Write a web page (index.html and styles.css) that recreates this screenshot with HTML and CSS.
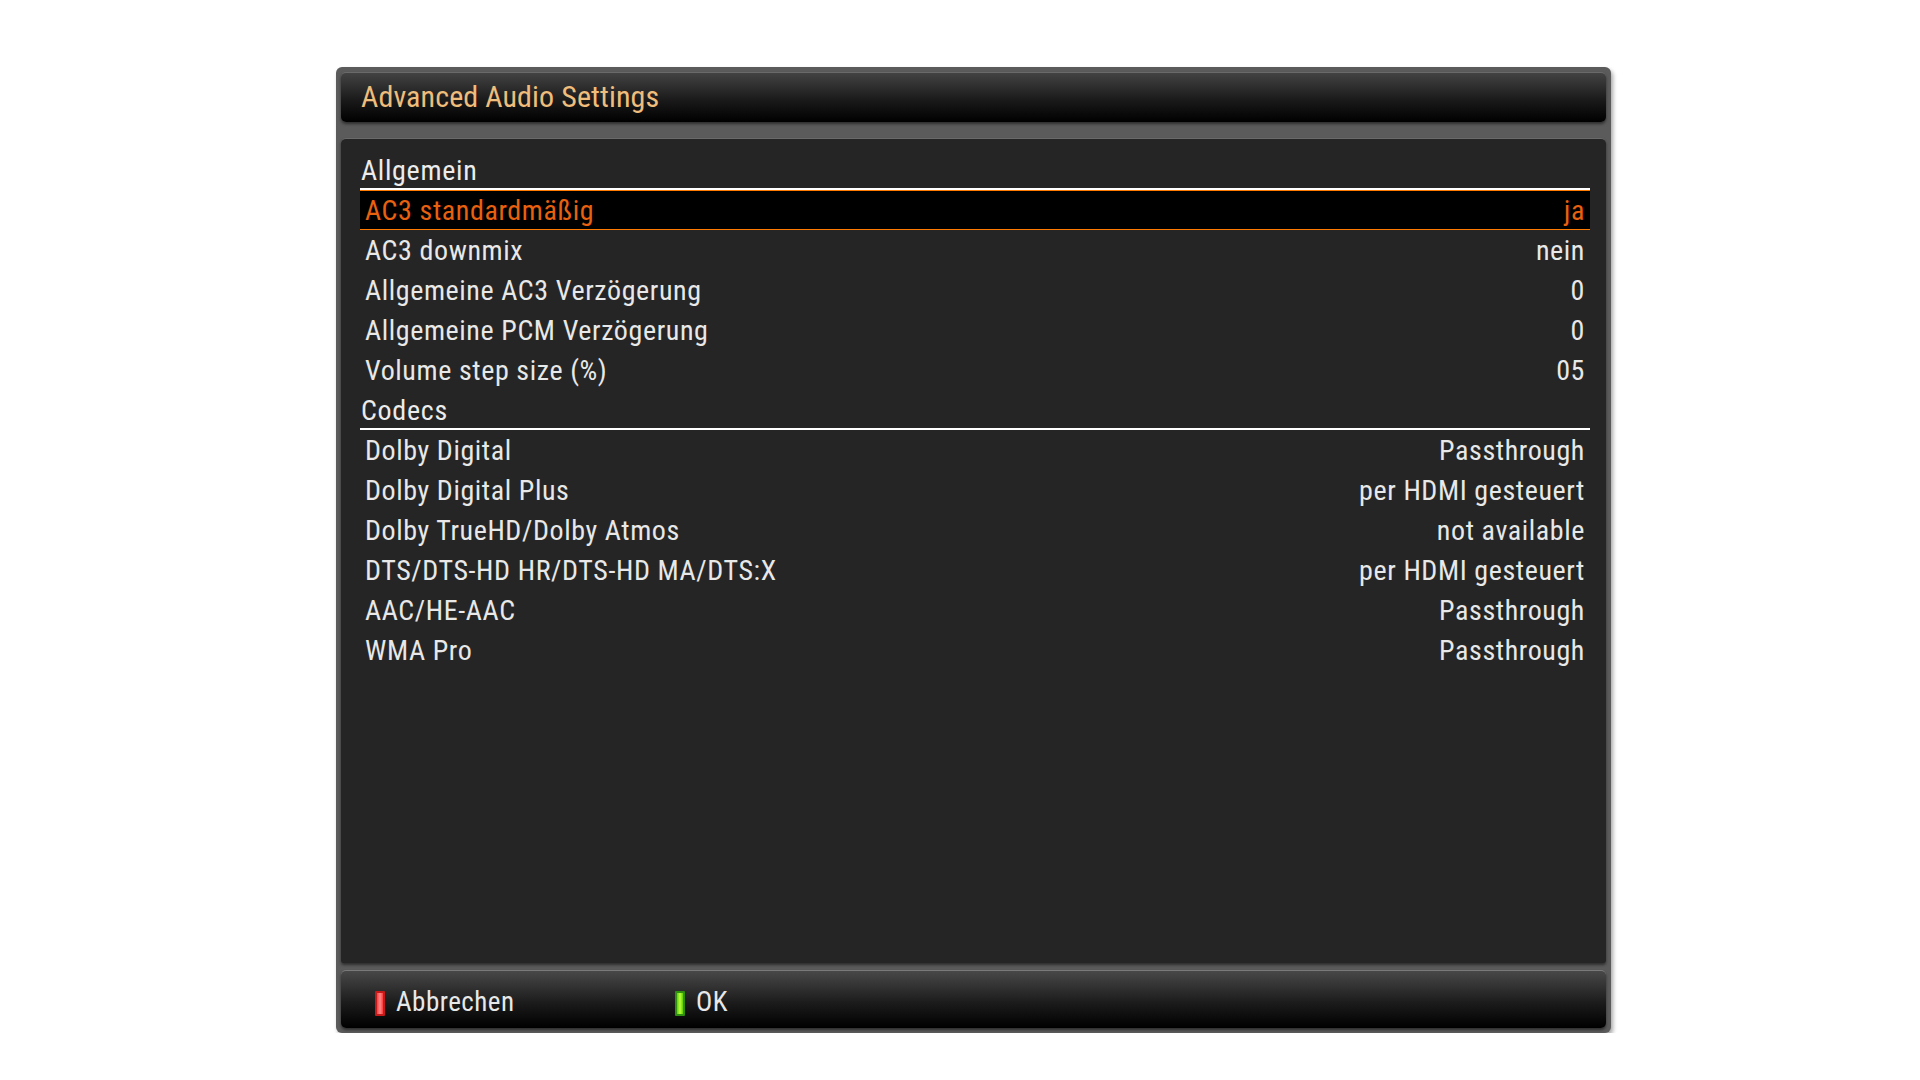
FILE: index.html
```html
<!DOCTYPE html>
<html>
<head>
<meta charset="utf-8">
<link rel="stylesheet" href="styles.css">
</head>
<body>
<div class="window">
  <div class="titlebar">Advanced Audio Settings</div>
  <div class="content">
    <div class="list">
      <div class="header">Allgemein</div>
      <div class="row selected"><span>AC3 standardmäßig</span><span>ja</span></div>
      <div class="row"><span>AC3 downmix</span><span>nein</span></div>
      <div class="row"><span>Allgemeine AC3 Verzögerung</span><span>0</span></div>
      <div class="row"><span>Allgemeine PCM Verzögerung</span><span>0</span></div>
      <div class="row"><span>Volume step size (%)</span><span>05</span></div>
      <div class="header">Codecs</div>
      <div class="row"><span>Dolby Digital</span><span>Passthrough</span></div>
      <div class="row"><span>Dolby Digital Plus</span><span>per HDMI gesteuert</span></div>
      <div class="row"><span>Dolby TrueHD/Dolby Atmos</span><span>not available</span></div>
      <div class="row"><span>DTS/DTS-HD HR/DTS-HD MA/DTS:X</span><span>per HDMI gesteuert</span></div>
      <div class="row"><span>AAC/HE-AAC</span><span>Passthrough</span></div>
      <div class="row"><span>WMA Pro</span><span>Passthrough</span></div>
    </div>
  </div>
  <div class="footer">
    <div class="btn"><span class="key red"></span><span>Abbrechen</span></div>
    <div class="btn"><span class="key green"></span><span>OK</span></div>
  </div>
</div>
</body>
</html>
```
FILE: styles.css
```css
html, body {
  margin: 0;
  padding: 0;
  background: #ffffff;
}
body {
  font-family: "Roboto Condensed", Roboto, "Liberation Sans", sans-serif;
  color: #e8e8e8;
}
.window {
  margin-left: 336px;
  margin-top: 67px;
  width: 1275px;
  height: 966px;
  box-sizing: border-box;
  padding: 5px;
  background: #5b5b5b;
  border-radius: 6px;
  box-shadow: 2px 3px 4px rgba(0,0,0,0.35);
  display: flex;
  flex-direction: column;
}
.titlebar {
  height: 50px;
  box-sizing: border-box;
  padding-left: 20px;
  line-height: 47px;
  font-size: 30px;
  letter-spacing: 0.1px;
  color: #efbd7c;
  border-radius: 5px;
  border-top: 1px solid #6a6a6a;
  background: linear-gradient(#434343, #1a1a1a 55%, #000000);
  box-shadow: 0 2px 3px rgba(0,0,0,0.5);
}
.content {
  margin-top: 16px;
  height: 825px;
  box-sizing: border-box;
  background: #252525;
  border-radius: 5px 5px 3px 3px;
  border-top: 1px solid #6a6a6a;
  padding: 11px 16px 0 19px;
  box-shadow: 0 2px 3px rgba(0,0,0,0.5);
}
.list {
  display: flex;
  flex-direction: column;
}
.header {
  height: 40px;
  box-sizing: border-box;
  padding-top: 3px;
  line-height: 36px;
  font-size: 28px;
  letter-spacing: 0.7px;
  padding-left: 1px;
  border-bottom: 2px solid #ffffff;
  color: #ececec;
}
.row {
  height: 40px;
  box-sizing: border-box;
  display: flex;
  justify-content: space-between;
  align-items: center;
  padding: 2px 5px 0 5px;
  line-height: 36px;
  font-size: 28px;
  letter-spacing: 0.6px;
  color: #e8e8e8;
}
.row.selected {
  background: #000000;
  border-top: 1px solid #ff7a00;
  border-bottom: 1px solid #ff7a00;
  color: #e8610f;
}
.footer {
  margin-top: 7px;
  height: 58px;
  box-sizing: border-box;
  border-radius: 5px;
  border-top: 1px solid #7a7a7a;
  background: linear-gradient(#484848, #1c1c1c 55%, #000000);
  padding: 7px 0 0 34px;
  display: flex;
  box-shadow: 0 2px 3px rgba(0,0,0,0.5);
}
.btn {
  width: 300px;
  height: 48px;
  display: flex;
  align-items: center;
  gap: 11px;
  font-size: 27px;
  letter-spacing: 0.5px;
  line-height: 48px;
  color: #e8e8e8;
}
.key {
  width: 6px;
  height: 21px;
  border: 2px solid;
  border-radius: 1px;
  margin-top: 2px;
}
.key.red {
  border-color: #c41a1a;
  background: linear-gradient(90deg, #ff3a3a, #ff8a8a 50%, #ff3a3a);
}
.key.green {
  border-color: #2f8f10;
  background: linear-gradient(90deg, #5fd000, #b8ff40 50%, #5fd000);
}
```
